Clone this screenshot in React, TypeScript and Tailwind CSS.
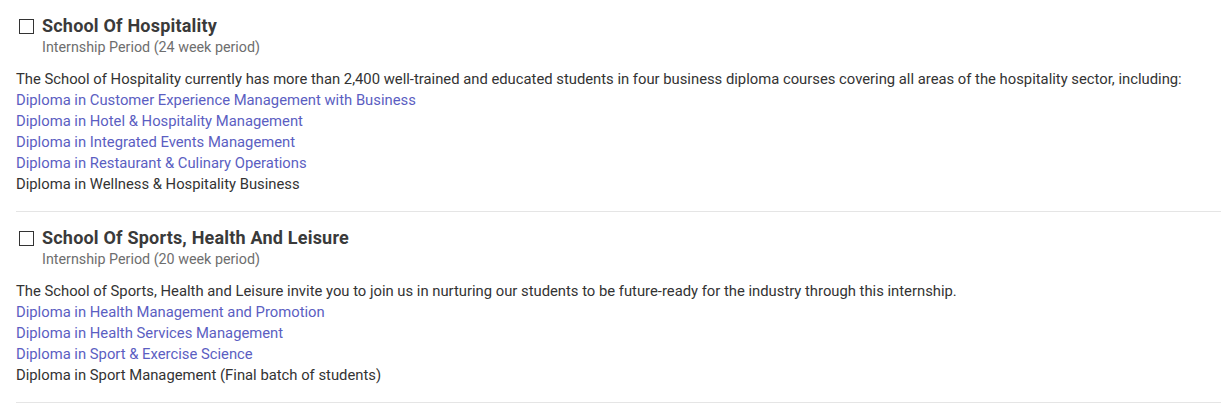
const schools = [
  {
    title: 'School Of Hospitality',
    period: 'Internship Period (24 week period)',
    intro:
      'The School of Hospitality currently has more than 2,400 well-trained and educated students in four business diploma courses covering all areas of the hospitality sector, including:',
    links: [
      'Diploma in Customer Experience Management with Business',
      'Diploma in Hotel & Hospitality Management',
      'Diploma in Integrated Events Management',
      'Diploma in Restaurant & Culinary Operations',
    ],
    plain: 'Diploma in Wellness & Hospitality Business',
  },
  {
    title: 'School Of Sports, Health And Leisure',
    period: 'Internship Period (20 week period)',
    intro:
      'The School of Sports, Health and Leisure invite you to join us in nurturing our students to be future-ready for the industry through this internship.',
    links: [
      'Diploma in Health Management and Promotion',
      'Diploma in Health Services Management',
      'Diploma in Sport & Exercise Science',
    ],
    plain: 'Diploma in Sport Management (Final batch of students)',
  },
];

export default function App() {
  return (
    <div className="min-h-[415px] bg-white pl-4 font-['Roboto',sans-serif] text-[#333]">
      {schools.map((school) => (
        <section
          key={school.title}
          className="border-b border-[#e5e5e5] pt-[15px] pb-[16px]"
        >
          <label className="flex items-center">
            <input
              type="checkbox"
              className="ml-[3px] mr-[8px] h-[15px] w-[15px] appearance-none border border-[#333] bg-white"
            />
            <span className="text-[18px] leading-[22px] font-bold tracking-[0.2px] text-[#3a3a3a]">
              {school.title}
            </span>
          </label>
          <p className="mt-[1px] pl-[26px] text-[14.3px] leading-[18px] text-[#6e6e6e]">
            {school.period}
          </p>
          <div className="mt-[13px] text-[14.8px] leading-[21px] text-[#333]">
            <p>{school.intro}</p>
            {school.links.map((link) => (
              <a key={link} href="#" className="block text-[#5b5ec2]">
                {link}
              </a>
            ))}
            <p>{school.plain}</p>
          </div>
        </section>
      ))}
    </div>
  );
}
